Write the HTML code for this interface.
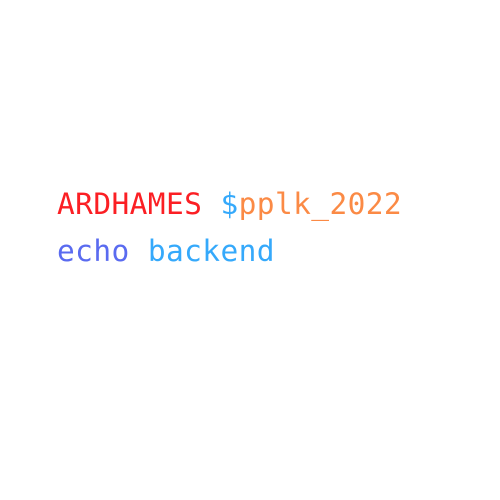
<html><head><style>
body{margin:0;width:500px;height:500px;background:#fff;}
.l{position:absolute;left:57px;font-family:"DejaVu Sans Mono","Liberation Mono",monospace;font-size:29.5px;line-height:1;white-space:pre;letter-spacing:0.4px}
</style></head><body>
<div class="l" style="top:190px"><span style="color:#fb1f24">ARDHAMES</span> <span style="color:#35a9fb">$</span><span style="color:#fb8a45">pplk_2022</span></div>
<div class="l" style="top:237px"><span style="color:#5a6bf0">echo</span> <span style="color:#35a9fb">backend</span></div>
</body></html>
